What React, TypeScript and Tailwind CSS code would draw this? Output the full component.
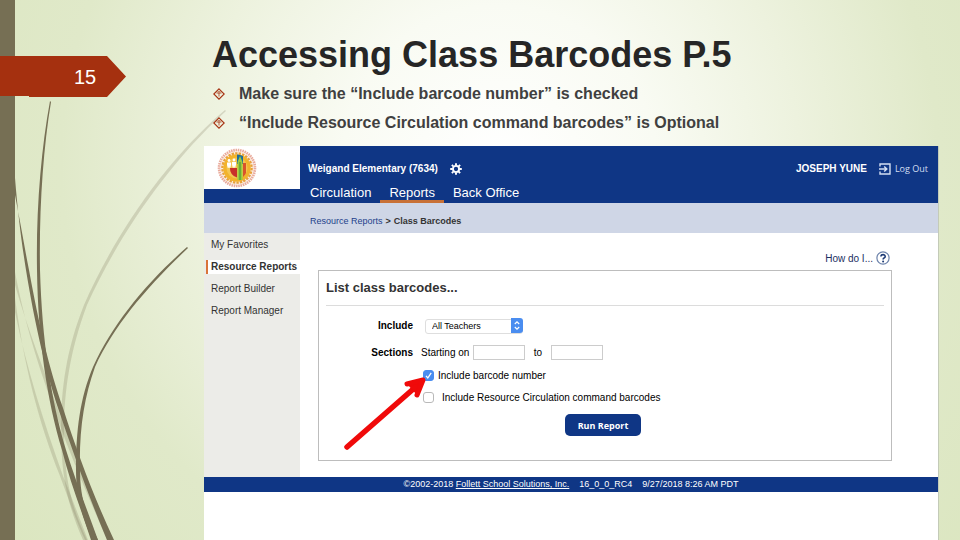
import type { ReactNode } from "react";
import clsx from "clsx";

const bullets = [
	"Make sure the “Include barcode number” is checked",
	"“Include Resource Circulation command barcodes” is Optional",
];

const tabs = [
	{ label: "Circulation", active: false },
	{ label: "Reports", active: true },
	{ label: "Back Office", active: false },
];

const sideLinks = [
	{ label: "My Favorites", active: false },
	{ label: "Resource Reports", active: true },
	{ label: "Report Builder", active: false },
	{ label: "Report Manager", active: false },
];

const Wisps = () => (
	<svg
		className="absolute left-0 bottom-0 h-full pointer-events-none"
		viewBox="0 0 240 540"
		preserveAspectRatio="xMinYMax meet"
		fill="none"
		aria-hidden="true">
		<g fill="#766f54" fillOpacity="0.22">
			<path d="M225 110 C160 165 110 245 84 305 C66 350 61 390 61 430 C61 480 69 508 83 540 L87 540 C72 508 64 480 64 430 C64 392 70 350 87 305 C114 245 163 168 226 111 Z" />
			<path d="M15 272 C26 330 42 376 58 420 C72 460 90 500 107 540 L111 540 C95 500 77 460 62 420 C46 376 28 330 15 285 Z" />
			<path d="M15 298 C24 365 38 420 60 476 C68 498 76 520 85 540 L88 540 C80 520 72 498 63 476 C43 420 27 370 15 312 Z" />
		</g>
		<g fill="#766f54">
			<path d="M50 101 C41 150 36 210 37 270 C38 340 47 400 62 450 C70 482 82 512 91 540 L98 540 C88 512 76 482 66 450 C51 400 42 340 40 270 C39 210 43 150 51 102 Z" />
			<path d="M15 178 C18 215 22 245 26 270 C35 325 45 368 58 408 C73 452 90 500 107 540 L114 540 C95 500 77 452 63 408 C49 368 39 325 29 270 C24 245 20 220 15 195 Z" />
			<path d="M187 247 C145 284 112 325 93 367 C80 398 76 430 76 470 C76 500 84 520 92 540 L98 540 C88 520 80 500 80 470 C79 430 84 398 95 367 C114 325 148 286 188 248 Z" />
		</g>
	</svg>
);

const Bullet = () => (
	<svg className="size-3 shrink-0" viewBox="0 0 12 12" fill="none" stroke="#a5300f" aria-hidden="true">
		<path d="M6 .8 11.2 6 6 11.2 .8 6Z" strokeWidth="1.1" />
		<path d="M3.5 5h5M6 5v3.5M4.6 3.8h2.8" strokeWidth=".8" />
	</svg>
);

const Seal = () => (
	<svg className="size-10" viewBox="0 0 40 40" role="img" aria-label="District seal">
		<circle cx="20" cy="20" r="18" fill="#fbeee6" stroke="#e9aa9b" strokeWidth="2.6" strokeDasharray="1.5 .8" />
		<circle cx="20" cy="20" r="14.6" fill="none" stroke="#e8a13c" strokeWidth="2.4" strokeDasharray="2.4 1.1" />
		<circle cx="20" cy="20" r="13.8" fill="#f2b32c" />
		<circle cx="20" cy="20" r="10.5" fill="#f3c552" />
		<path d="M13 20h7v9.500A9 9 0 0 1 13 20Z" fill="#c8302a" />
		<path d="M20 6.500a13.500 13.500 0 0 1 6 1.500v8h-6z" fill="#1d6d9c" />
		<path d="M20.500 14 23 8l2.500 6v18h-5z" fill="#9ccb3f" />
		<path d="M23 14v18" stroke="#3d8f3a" strokeWidth="1" />
		<path d="M26 15h3v10a11 11 0 0 1-3 4z" fill="#d9542b" />
		<g fill="#fff">
			<circle cx="12" cy="12.500" r="1.400" />
			<circle cx="17" cy="12" r="1.400" />
			<path d="M10 14.500h4v2.500l-.800 3h-.800l-.400-1.800-.400 1.800h-.800l-.800-3zM15 14h4v2.500l-.800 3.200h-.800l-.400-2-.400 2h-.800l-.800-3.200z" />
		</g>
	</svg>
);

const Gear = () => (
	<svg className="size-3" viewBox="0 0 12 12" fill="none" stroke="#fff" aria-hidden="true">
		<circle cx="6" cy="6" r="3.100" strokeWidth="1.900" />
		<path
			d="M6 .2v2M6 9.800v2M.2 6h2M9.800 6h2M1.900 1.900l1.400 1.400M8.700 8.700l1.400 1.400M10.100 1.900 8.700 3.300M3.300 8.700l-1.400 1.400"
			strokeWidth="1.900"
		/>
	</svg>
);

const LogOutIcon = () => (
	<svg className="size-3" viewBox="0 0 12 12" fill="none" stroke="#d3def2" aria-hidden="true">
		<path d="M1 3.500V1h10v10H1V8.500" strokeWidth="1.400" />
		<path d="M0 6h7.500M5.200 3.500 7.800 6 5.200 8.500" strokeWidth="1.500" />
	</svg>
);

const HelpIcon = () => (
	<svg className="size-3.5" viewBox="0 0 14 14" fill="none" aria-hidden="true">
		<circle cx="7" cy="7" r="6.100" stroke="#6d83ab" strokeWidth="1.200" />
		<path d="M4.900 5.500C4.900 2.900 9.200 3 9.200 5.400 9.200 7 7.100 6.900 7.100 8.600" stroke="#1d3a75" strokeWidth="1.600" />
		<circle cx="7.100" cy="10.500" r="1" fill="#1d3a75" />
	</svg>
);

const CheckRow = ({
	id,
	checked,
	children,
}: {
	id: string;
	checked?: boolean;
	children: ReactNode;
}) => (
	<div className="h-[22px] flex items-center gap-1">
		<span className="relative flex">
			<input
				id={id}
				type="checkbox"
				defaultChecked={checked}
				className="peer size-[11px] appearance-none rounded-[3px] border border-[#b9b9b9] bg-white checked:border-[#4a8df0] checked:bg-[#4a8df0]"
			/>
			<svg
				className="absolute inset-0 size-[11px] opacity-0 peer-checked:opacity-100 pointer-events-none"
				viewBox="0 0 11 11"
				fill="none"
				stroke="#fff"
				strokeWidth="1.300"
				aria-hidden="true">
				<path d="M3 5.800 4.800 8 8.200 2.800" />
			</svg>
		</span>
		<label htmlFor={id}>{children}</label>
	</div>
);

const ReportForm = () => (
	<form
		className="relative border border-[#bdbdbd] px-[7px] pb-6 text-[10px] leading-[15px] text-black"
		onSubmit={(e) => e.preventDefault()}>
		<h2 className="h-[35px] leading-[34px] text-[13px] font-bold text-[#333] border-b border-[#dcdcdc]">
			List class barcodes...
		</h2>
		<div className="grid grid-cols-[87px_1fr] gap-x-2 pt-3">
			<label htmlFor="teachers" className="text-right font-bold">
				Include
			</label>
			<div className="pl-1 pb-3">
				<div className="relative w-[98px] h-[15px]">
					<select
						id="teachers"
						className="w-full h-full appearance-none rounded-[3px] border border-[#dedede] bg-white pl-1.5 text-[9px] leading-[13px]">
						<option>All Teachers</option>
					</select>
					<svg
						className="absolute right-0 top-0 w-3 h-[15px] pointer-events-none"
						viewBox="0 0 12 15"
						fill="none"
						aria-hidden="true">
						<path d="M0 0h9a3 3 0 0 1 3 3v9a3 3 0 0 1-3 3H0z" fill="#4a8df0" />
						<path d="M3.800 6 6 3.800 8.200 6M3.800 9 6 11.200 8.200 9" stroke="#fff" strokeWidth="1.200" />
					</svg>
				</div>
			</div>
			<span className="text-right font-bold">Sections</span>
			<div className="flex items-center">
				<label htmlFor="from" className="w-[52px]">
					Starting on
				</label>
				<input id="from" type="text" className="w-[52px] h-[15px] border border-[#ccc] bg-white px-1" />
				<label htmlFor="to" className="w-[26px] text-center">
					to
				</label>
				<input id="to" type="text" className="w-[52px] h-[15px] border border-[#ccc] bg-white px-1" />
			</div>
			<div className="col-start-2 pt-1 pl-0.5">
				<CheckRow id="barcode-number" checked>
					Include barcode number
				</CheckRow>
				<CheckRow id="command-barcodes">
					<span className="pl-1">Include Resource Circulation command barcodes</span>
				</CheckRow>
			</div>
		</div>
		<div className="flex justify-center pt-1.5 pr-1">
			<button
				type="submit"
				className="w-[76px] h-[22px] rounded-[5px] bg-[#0f3685] font-['Open_Sans',sans-serif] text-[9px] font-bold text-white">
				Run Report
			</button>
		</div>
		{/* pointer to the checked box */}
		<svg
			className="absolute left-[22px] top-[100px] w-[90px] h-[84px] pointer-events-none"
			viewBox="0 0 90 84"
			fill="none"
			stroke="#f00a0a"
			strokeLinecap="round"
			strokeLinejoin="round"
			aria-hidden="true">
			<path d="M6 76 78 13" strokeWidth="5.500" />
			<path d="M66 13 82 9 76 24" fill="#f00a0a" strokeWidth="5" />
		</svg>
	</form>
);

const CatalogWindow = () => (
	<section className="flex-1 bg-white border-r border-[#c4cbb8]">
		<header className="flex bg-[#0f3685] text-white">
			<div className="w-24 h-[43px] shrink-0 bg-white pl-[13px] pt-0.5">
				<Seal />
			</div>
			<div className="flex-1">
				<div className="h-[35px] pt-2.5 pl-2 pr-2.5 flex items-center justify-between text-[10px] font-bold">
					<div className="flex items-center gap-3">
						<span>Weigand Elementary (7634)</span>
						<button type="button" aria-label="Settings">
							<Gear />
						</button>
					</div>
					<div className="flex items-center gap-3">
						<span>JOSEPH YUNE</span>
						<a
							href="#logout"
							className="flex items-center gap-1 font-['Open_Sans',sans-serif] text-[9px] font-medium text-[#d3def2]">
							<LogOutIcon />
							Log Out
						</a>
					</div>
				</div>
				<nav className="flex h-[22px] pl-px text-[13px] leading-[24px]">
					{tabs.map((t) => (
						<a
							key={t.label}
							href="#tab"
							className={clsx("px-[9px] border-b-3", t.active ? "border-[#c87137]" : "border-transparent")}>
							{t.label}
						</a>
					))}
				</nav>
			</div>
		</header>
		<div className="h-[30px] pt-2 pl-[106px] flex items-center gap-[3px] bg-[#cfd6e6] text-[9px] text-[#333]">
			<a href="#reports" className="text-[#1d3f8b]">
				Resource Reports
			</a>
			<span className="font-bold">&gt;</span>
			<span className="font-bold">Class Barcodes</span>
		</div>
		<div className="flex">
			<aside className="w-24 shrink-0 bg-[#ecece8] pt-[5px] flex flex-col gap-2 text-[10px] leading-[14px] text-[#333]">
				{sideLinks.map((l) => (
					<a
						key={l.label}
						href="#section"
						className={clsx(
							"ml-0.5 border-l-2 pl-[3px] whitespace-nowrap",
							l.active ? "bg-white border-[#d9743a] font-bold" : "border-transparent"
						)}>
						{l.label}
					</a>
				))}
			</aside>
			<div className="flex-1 pl-[18px] pr-[46px] pb-4">
				<div className="flex justify-end pt-4 pb-[3px] pr-0.5">
					<a href="#help" className="h-[18px] flex items-center gap-[3px] text-[10px] text-[#1b2f5f]">
						How do I...
						<HelpIcon />
					</a>
				</div>
				<ReportForm />
			</div>
		</div>
		<footer className="h-[15px] flex items-center justify-center gap-2.5 bg-[#0f3685] text-[9px] text-white">
			<span>
				©2002-2018{" "}
				<a href="#follett" className="underline">
					Follett School Solutions, Inc.
				</a>
			</span>
			<span>16_0_0_RC4</span>
			<span>9/27/2018 8:26 AM PDT</span>
		</footer>
	</section>
);

export default function App() {
	return (
		<div className="relative min-h-screen flex overflow-hidden font-['Liberation_Sans',Arial,sans-serif] bg-[radial-gradient(circle_at_52%_30%,#ffffff_0%,#f9fbf3_25%,#edf2de_48%,#e0e9c9_70%,#dbe6c0_100%)]">
			<div className="absolute inset-y-0 left-0 w-[15px] bg-[#766f54]" />
			<Wisps />
			<div className="relative w-[204px] shrink-0 pt-14">
				<div className="w-[126px] h-[41px] pl-[74px] flex items-center bg-[#a5300f] text-xl text-white [clip-path:polygon(0_0,107px_0,100%_50%,107px_100%,29px_100%,29px_40px,0_40px)]">
					15
				</div>
			</div>
			<main className="relative flex-1 flex flex-col pr-[21px]">
				<h1 className="pt-8 pl-2 text-4xl leading-[46px] font-bold text-[#262626]">
					Accessing Class Barcodes P.5
				</h1>
				<ul className="pt-px pb-[9px] pl-[9px] text-base leading-[29px] font-bold text-[#404040]">
					{bullets.map((b) => (
						<li key={b} className="flex items-center gap-3.5">
							<Bullet />
							{b}
						</li>
					))}
				</ul>
				<CatalogWindow />
			</main>
		</div>
	);
}
